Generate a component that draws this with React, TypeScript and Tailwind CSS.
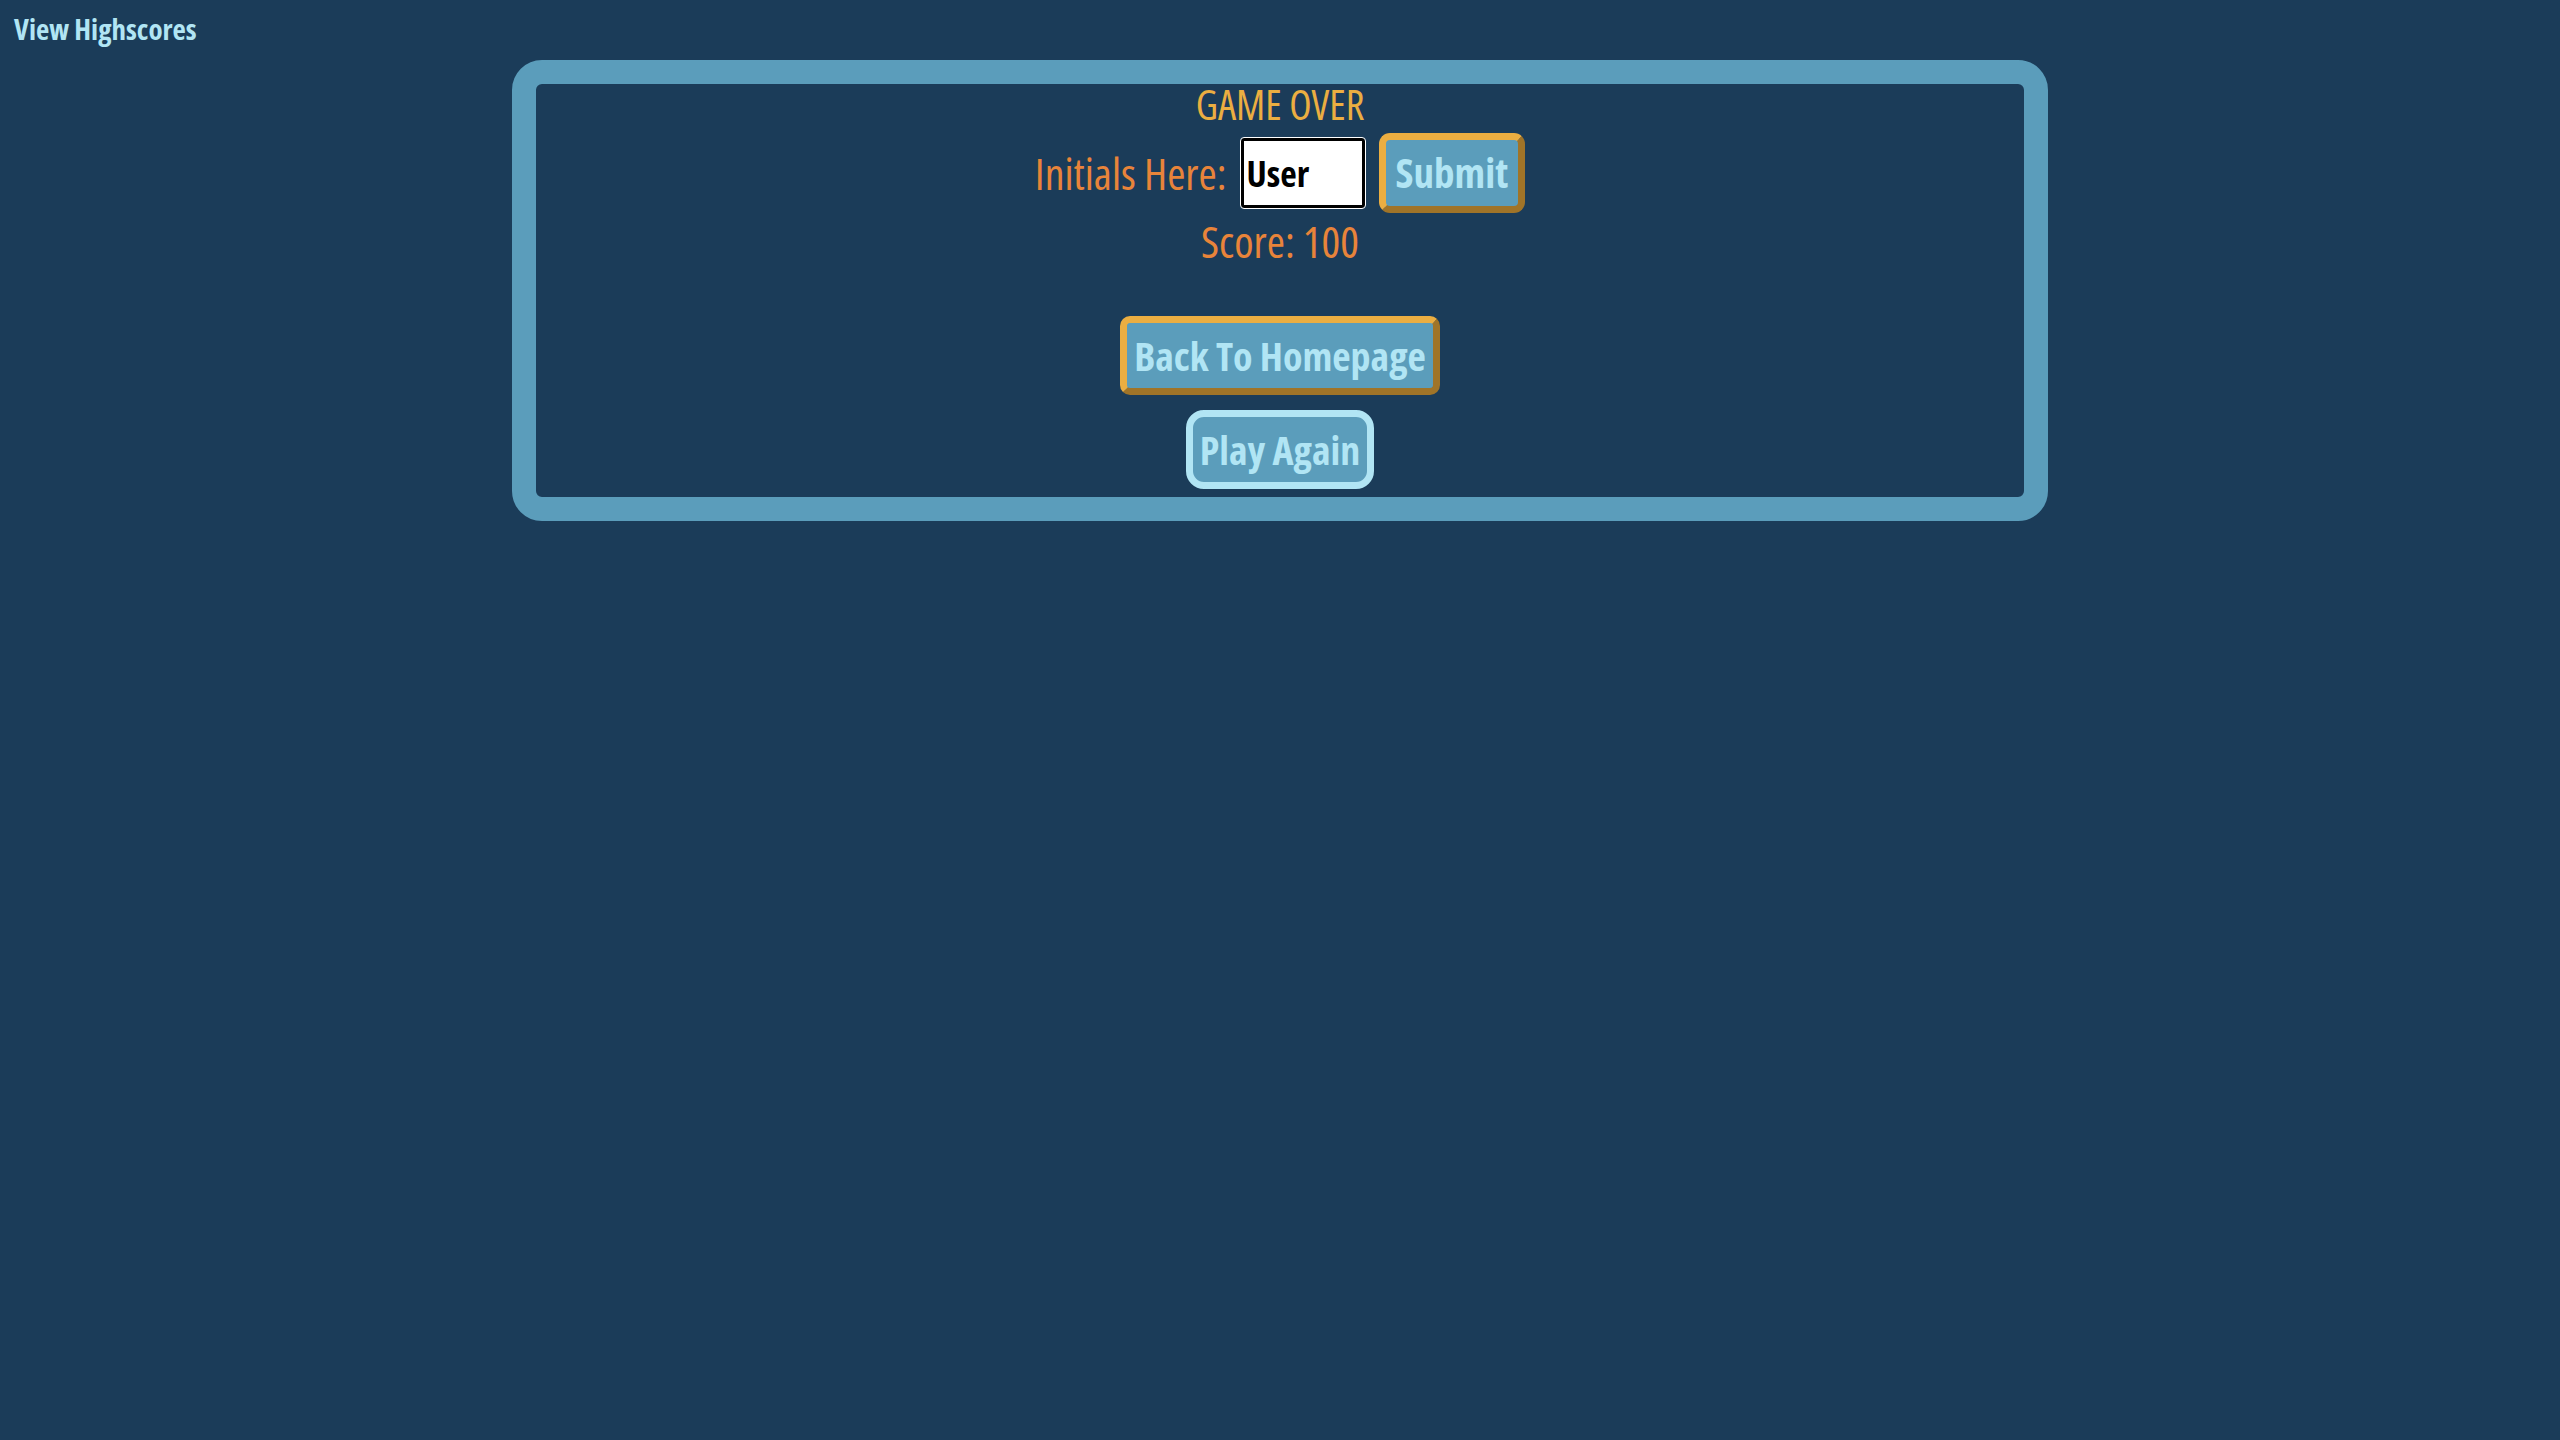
const font = "font-['Open_Sans',sans-serif] font-stretch-[75%]"

export default function App() {
  return (
    <div className={`min-h-screen bg-[#1b3c59] ${font}`}>
      {/* top link */}
      <div className="h-[60px] pl-[14px] pt-[10px]">
        <a className="cursor-pointer text-[29px] leading-[38px] font-bold text-[#b1e5f4]">View Highscores</a>
      </div>

      {/* end-of-game card */}
      <div className="mx-auto w-[1536px] rounded-[30px] border-[24px] border-[#5b9dbb]">
        <div className="flex flex-col items-center pb-[8px]">
          <h1 className="-mt-[3px] text-[41px] leading-[46px] text-[#ebae41]">GAME OVER</h1>

          <div className="mt-[6px] flex h-[80px] items-center gap-[14px]">
            <span className="text-[44px] leading-[46px] text-[#e8843a]">Initials Here:</span>
            <input
              defaultValue="User"
              className={`h-[70px] w-[124px] rounded-[3px] border-[3px] border-black bg-white pl-[3px] text-[36px] font-bold text-black outline outline-1 outline-white ${font}`}
            />
            <button
              className={`h-[80px] rounded-[11px] border-[7px] border-t-[#ebae41] border-l-[#ebae41] border-b-[#a07428] border-r-[#a07428] bg-[#5b9dbb] px-[10px] text-[41px] font-bold text-[#b1e5f4] ${font}`}
            >
              Submit
            </button>
          </div>

          <p className="mt-[5px] text-[44px] leading-[46px] text-[#e8843a]">Score: 100</p>

          <button
            className={`mt-[52px] h-[79px] rounded-[10px] border-[7px] border-t-[#ebae41] border-l-[#ebae41] border-b-[#a07428] border-r-[#a07428] bg-[#5b9dbb] px-[7px] text-[40px] font-bold text-[#b1e5f4] ${font}`}
          >
            Back To Homepage
          </button>

          <button
            className={`mt-[15px] h-[79px] rounded-[18px] border-[7px] border-[#b1e5f4] bg-[#5b9dbb] px-[7px] text-[40px] font-bold text-[#b1e5f4] ${font}`}
          >
            Play Again
          </button>
        </div>
      </div>
    </div>
  )
}
